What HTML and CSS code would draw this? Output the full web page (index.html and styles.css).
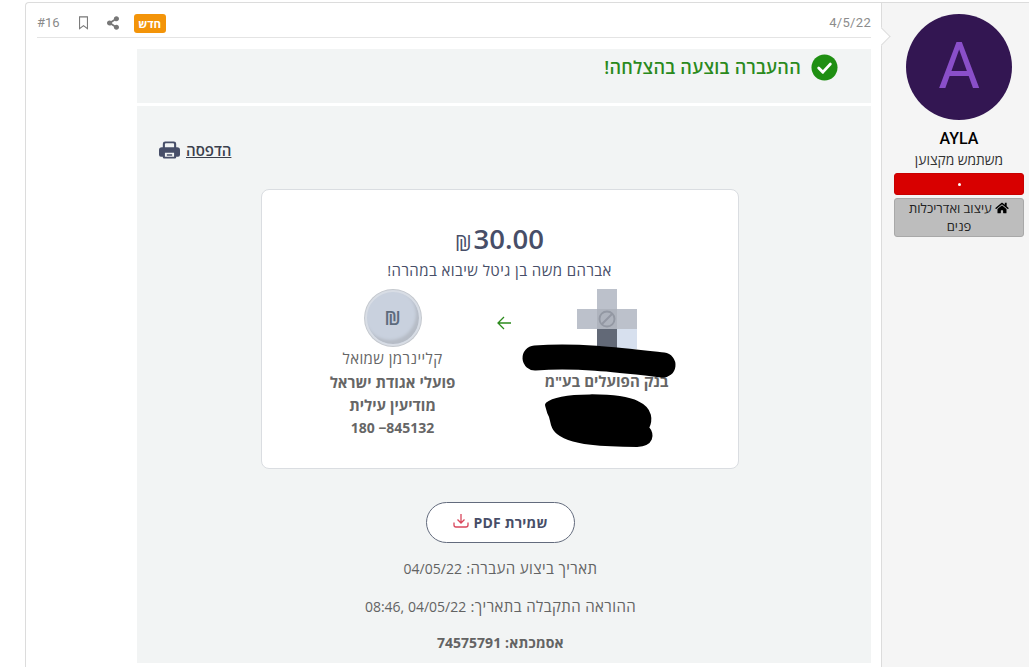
FILE: index.html
```html
<!DOCTYPE html>
<html lang="he" dir="rtl">
<head>
<meta charset="utf-8">
<title>העברה</title>
<link rel="stylesheet" href="styles.css">
</head>
<body>
<div class="thread">
  <aside class="author">
    <div class="avatar">A</div>
    <div class="author-name">AYLA</div>
    <div class="author-title">משתמש מקצוען</div>
    <div class="badge-red"><span class="dot"></span></div>
    <div class="badge-gray">
      <svg class="home" viewBox="0 0 576 512"><path d="M280 148 95 300v164c0 9 7 16 16 16l112-.3c9 0 16-7 16-16V368c0-9 7-16 16-16h64c9 0 16 7 16 16v95.600c0 9 7 16 16 16l112 .4c9 0 16-7 16-16V300L296 148c-5-4-11-4-16 0zM572 251l-84-69V44c0-7-5-12-12-12h-56c-7 0-12 5-12 12v72l-89-74c-18-14-43-14-61 0L4 251c-5 4-6 12-2 17l26 31c4 5 12 6 17 2L280 107c5-4 11-4 16 0l235 194c5 4 13 3 17-2l26-31c4-5 3-13-2-17z"/></svg>
      עיצוב ואדריכלות פנים
    </div>
  </aside>
  <article class="post">
    <span class="arrow"></span>
    <header class="post-head">
      <span class="date">4/5/22</span>
      <div class="head-tools">
        <span class="new-tag">חדש</span>
        <svg class="share" viewBox="0 0 448 512"><path d="M352 320c-23 0-43 8-59 21l-103-64a97 97 0 0 0 0-42l103-64c16 13 36 21 59 21 53 0 96-43 96-96S405 0 352 0s-96 43-96 96c0 7 1 14 2 21l-103 64c-16-13-36-21-59-21-53 0-96 43-96 96s43 96 96 96c23 0 43-8 59-21l103 64c-1 7-2 14-2 21 0 53 43 96 96 96s96-43 96-96-43-96-96-96z"/></svg>
        <svg class="bookmark" viewBox="0 0 12 16"><path d="M1.500 1h9v13.500L6 11l-4.500 3.500z"/></svg>
        <span class="post-num">#16</span>
      </div>
    </header>
    <div class="content">
      <div class="success">
        <svg class="check" viewBox="0 0 28 28"><circle cx="14" cy="14" r="13.500"/><path d="m8 14.500 4.300 4.300L20 10.500"/></svg>
        <span>ההעברה בוצעה בהצלחה!</span>
      </div>
      <div class="panel">
        <a class="print">
          <span>הדפסה</span>
          <svg class="print-icon" viewBox="0 0 22 18"><path d="M4 6V2.500A2.500 2.500 0 0 1 6.500 0h9A2.500 2.500 0 0 1 18 2.500V6h1a3 3 0 0 1 3 3v5a2 2 0 0 1-2 2h-2v.500a1.500 1.500 0 0 1-1.500 1.500h-11A1.500 1.500 0 0 1 4 16.500V16H2a2 2 0 0 1-2-2V9a3 3 0 0 1 3-3zm2.200 0h9.600V3a1 1 0 0 0-1-1H7.200a1 1 0 0 0-1 1zm0 6v4h9.600v-4zm2 1.500h5.600V15H8.200z" fill-rule="evenodd"/></svg>
        </a>
        <div class="receipt">
          <div class="amount"><span>30.00</span><span class="shekel">₪</span></div>
          <div class="wish">אברהם משה בן גיטל שיבוא במהרה!</div>
          <div class="parties">
            <div class="party party-from">
              <div class="bank-logo">
                <span class="cell"></span><span class="cell c-a"></span><span class="cell"></span>
                <span class="cell c-a"></span><span class="cell c-b"><svg viewBox="0 0 16 16"><circle cx="8" cy="8" r="6"/><path d="m4 12 8-8"/></svg></span><span class="cell c-a"></span>
                <span class="cell c-d"></span><span class="cell c-c"></span><span class="cell"></span>
              </div>
              <div class="hidden-line"></div>
              <div class="bold-line">בנק הפועלים בע"מ</div>
            </div>
            <svg class="to-arrow" viewBox="0 0 16 14"><path d="M15 7H2M8 1 2 7l6 6"/></svg>
            <div class="party party-to">
              <div class="coin"><span>₪</span></div>
              <div class="name-line">קליינרמן שמואל</div>
              <div class="bold-line">פועלי אגודת ישראל</div>
              <div class="bold-line">מודיעין עילית</div>
              <div class="bold-line acct">845132− 180</div>
            </div>
          </div>
          <svg class="scribble" viewBox="0 0 477 280"><path class="sc-top" d="M273 168C317 165 357 170 401 175"/><path class="sc-low" d="M286 215C297 205 357 205 375 214C388 220 388 230 384 238C390 245 389 253 375 254C347 254 307 253 295 240C290 235 292 228 288 222Z"/></svg>
        </div>
        <a class="pdf-btn">
          <span>שמירת PDF</span>
          <svg class="dl" viewBox="0 0 16 16"><path d="M8 1v9M4.500 6.500 8 10l3.500-3.500"/><path class="tray" d="M1 9.500V12a2 2 0 0 0 2 2h10a2 2 0 0 0 2-2V9.500"/></svg>
        </a>
        <p class="meta">תאריך ביצוע העברה: <span class="num">04/05/22</span></p>
        <p class="meta">ההוראה התקבלה בתאריך: <span class="num" dir="ltr">08:46, 04/05/22</span></p>
        <p class="meta meta-bold">אסמכתא: <span class="num">74575791</span></p>
      </div>
    </div>
  </article>
</div>
</body>
</html>
```
FILE: styles.css
```css
* { box-sizing: border-box; }
html, body { margin: 0; height: 667px; overflow: hidden; background: #fff; }
body { font-family: "Open Sans", Roboto, "Liberation Sans", sans-serif; color: #333; }
.thread {
  display: flex;
  margin: 2px 0 0 25px;
  height: 665px;
  border: 1px solid #dcdcdc;
  border-right: 0;
  border-top-left-radius: 4px;
  border-bottom: 0;
}
.author {
  width: 148px;
  flex: none;
  background: #f5f5f5;
  border-left: 1px solid #dcdcdc;
  padding: 11px 5px 0 12px;
  text-align: center;
}
.avatar {
  width: 106px;
  height: 106px;
  margin: 0 auto;
  border-radius: 50%;
  background: #331652;
  color: #8a4fc9;
  font: 64px/106px Roboto, sans-serif;
}
.author-name { margin-top: 9px; font: 500 16px/19px Roboto, sans-serif; color: #000; }
.author-title { margin-top: 3px; font: 13.800px/18px Roboto, "Open Sans", sans-serif; color: #333; }
.badge-red {
  height: 22px;
  margin-top: 4px;
  background: #d80000;
  border: 1px solid #c80000;
  border-radius: 3px;
  display: flex;
  align-items: center;
  justify-content: center;
}
.dot { width: 3px; height: 3px; border-radius: 50%; background: #fff; }
.badge-gray {
  margin-top: 3px;
  background: #bdbdbd;
  border: 1px solid #a8a8a8;
  border-radius: 3px;
  padding: 1px 8px 0;
  font: 13px/18px Roboto, "Open Sans", sans-serif;
  color: #222;
}
.home { width: 14px; height: 12px; fill: #000; vertical-align: -1px; }
.post { flex: 1; min-width: 0; position: relative; padding: 0 10px 0 11px; }
.arrow {
  position: absolute;
  top: 27px;
  right: -7px;
  width: 13px;
  height: 13px;
  background: #fff;
  border-top: 1px solid #dcdcdc;
  border-right: 1px solid #dcdcdc;
  transform: rotate(45deg);
}
.post-head {
  height: 35px;
  padding-top: 6px;
  border-bottom: 1px solid #e4e4e4;
  display: flex;
  justify-content: space-between;
  align-items: center;
  font: 13px/16px Roboto, sans-serif;
  color: #8a8a8a;
}
.date { color: #8c8c8c; letter-spacing: .3px; }
.head-tools { display: flex; align-items: center; }
.new-tag {
  width: 32px;
  height: 19px;
  background: #f39409;
  color: #fff;
  border-radius: 3px;
  font: 700 11.500px/19px "Open Sans", sans-serif;
  text-align: center;
}
.share { width: 12px; height: 14px; fill: #777; margin-right: 15px; }
.bookmark { width: 11px; height: 14px; fill: none; stroke: #777; stroke-width: 1.200; margin-right: 18px; }
.post-num { margin-right: 18px; color: #8a8a8a; }
.content { margin: 11px 0 0 100px; }
.success {
  height: 54px;
  background: #f2f4f4;
  display: flex;
  gap: 10px;
  padding: 5px 33px 0 0;
  align-items: flex-start;
  color: #2a8a1c;
  font: 600 18px/26px "Open Sans", sans-serif;
  letter-spacing: .25px;
}
.check { width: 27px; height: 27px; flex: none; }
.check circle { fill: #1f8f12; }
.check path { fill: none; stroke: #fff; stroke-width: 3; stroke-linecap: round; stroke-linejoin: round; }
.panel {
  height: 557px;
  margin-top: 3px;
  background: #f2f4f4;
  padding: 34px 7px 0 0;
  text-align: center;
}
.print {
  display: flex;
  align-items: center;
  justify-content: flex-end;
  gap: 6px;
  margin-left: 22px;
  height: 20px;
  font: 600 15px/20px "Open Sans", sans-serif;
  color: #3a3f4c;
}
.print span { text-decoration: underline; }
.print-icon { width: 21px; height: 18px; fill: #474e68; }
.receipt {
  position: relative;
  width: 478px;
  height: 280px;
  margin: 29px auto 0;
  translate: -1px 0;
  background: #fff;
  border: 1px solid #dadde1;
  border-radius: 8px;
  padding-top: 31px;
}
.amount { font: 600 27.500px/36px "Open Sans", sans-serif; color: #474e68; direction: ltr; display: flex; justify-content: center; flex-direction: row-reverse; }
.shekel { font-size: 21px; line-height: 44px; font-weight: 400; margin-right: 2px; }
.wish { font: 500 15px/20px "Open Sans", sans-serif; letter-spacing: .43px; color: #474e68; margin-top: -5px; }
.parties { display: flex; align-items: flex-start; margin-top: 9px; padding-right: 41px; color: #666; }
.party { width: 180px; font: 15px/23px "Open Sans", sans-serif; }
.party-to { margin-right: 23px; width: 160px; }
.to-arrow { width: 16px; height: 14px; margin: 27px 5px 0 0; fill: none; stroke: #2b8a1c; stroke-width: 1.300; flex: none; }
.bank-logo { width: 60px; height: 60px; margin: 0 auto; display: grid; grid-template-columns: repeat(3, 20px); grid-template-rows: repeat(3, 20px); }
.cell { display: block; background: transparent; }
.c-a { background: #bcc1cb; }
.c-b { background: #aeb3bd; }
.c-b svg { width: 20px; height: 20px; fill: none; stroke: #9398a3; stroke-width: 1.500; display: block; }
.c-c { background: #626977; }
.c-d { background: #d7e0ee; }
.hidden-line { height: 21px; }
.bold-line { font-weight: 700; color: #666; }
.name-line { color: #666; letter-spacing: .43px; margin-bottom: 1px; }
.acct { font-size: 14px; margin-top: -1px; }
.coin {
  width: 56px;
  height: 56px;
  margin: 1px auto 1px;
  border-radius: 50%;
  background: #c9d1de;
  border: 2px solid #d8dde5;
  box-shadow: inset -3px -4px 3px #b6bcc6, 0 0 0 1px #c4c8ce;
  display: flex;
  align-items: center;
  justify-content: center;
  font-size: 19px;
  font-weight: 600;
  color: #5d6b7d;
}
.scribble {
  position: absolute;
  top: 0;
  left: 0;
  width: 477px;
  height: 280px;
}
.sc-top { fill: none; stroke: #000; stroke-width: 25px; stroke-linecap: round; }
.sc-low { fill: #000; stroke: #000; stroke-width: 6px; stroke-linejoin: round; }
.pdf-btn {
  display: flex;
  align-items: center;
  justify-content: center;
  gap: 4px;
  width: 149px;
  height: 41px;
  margin: 33px auto 0;
  background: #fff;
  border: 1px solid #636b7d;
  border-radius: 21px;
  font: 700 14px/20px "Open Sans", sans-serif;
  letter-spacing: .2px;
  color: #474e68;
}
.dl { width: 16px; height: 16px; fill: none; stroke: #d9475c; stroke-width: 1.300; margin-bottom: 3px; }
.meta { margin: 0; font: 500 15px/20px "Open Sans", sans-serif; letter-spacing: .4px; color: #636363; padding-top: 5px; height: 37.500px; }
.pdf-btn + .meta { margin-top: 10px; }
.meta-bold { font-size: 14px; font-weight: 700; letter-spacing: .2px; }
.num { font-size: 14px; letter-spacing: 0; }
```
